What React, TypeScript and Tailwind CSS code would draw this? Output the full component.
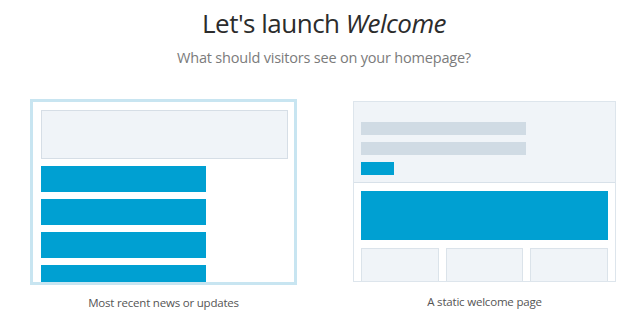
import React from "react";

export default function App() {
  const font = { fontFamily: '"Open Sans", "Noto Sans", sans-serif' };
  return (
    <div className="w-[640px] h-[335px] bg-white overflow-hidden" style={font}>
      <div className="flex flex-col items-center pt-[5px] pl-[8px]">
        <h1 className="text-[26px] leading-[36px] text-[#2c2c2c] font-normal tracking-[-0.5px]">
          Let's launch <em className="italic">Welcome</em>
        </h1>
        <p className="mt-[7px] text-[14.5px] leading-[20px] text-[#7b7b7b] tracking-[-0.2px]">
          What should visitors see on your homepage?
        </p>
      </div>

      <div className="flex mt-[33px] pl-[32px] gap-[58px]">
        <div className="flex flex-col items-center w-[263px]">
          <div className="w-[263px] h-[182px] border border-[#c8e5f1] outline-2 outline-solid outline-[#c8e5f1] bg-white p-[8px] pr-[6px] pb-0 overflow-hidden flex flex-col gap-[7px]">
            <div className="h-[49px] shrink-0 bg-[#f0f4f8] border border-[#d6dee6]" />
            <div className="h-[26px] w-[165px] shrink-0 bg-[#00a0d2]" />
            <div className="h-[26px] w-[165px] shrink-0 bg-[#00a0d2]" />
            <div className="h-[26px] w-[165px] shrink-0 bg-[#00a0d2]" />
            <div className="h-[26px] w-[165px] shrink-0 bg-[#00a0d2]" />
          </div>
          <div className="mt-[13px] text-[11.5px] leading-[14px] text-[#555] tracking-[-0.2px]">
            Most recent news or updates
          </div>
        </div>

        <div className="flex flex-col items-center w-[263px]">
          <div className="w-[263px] h-[181px] border border-[#dde5ec] bg-white overflow-hidden flex flex-col">
            <div className="h-[81px] shrink-0 bg-[#f0f4f8] border-b border-[#d8e1e9] px-[7px] pt-[20px] flex flex-col gap-[7px]">
              <div className="h-[13px] w-[165px] bg-[#d0dbe4]" />
              <div className="h-[13px] w-[165px] bg-[#d0dbe4]" />
              <div className="h-[13px] w-[33px] bg-[#00a0d2]" />
            </div>
            <div className="px-[7px] pt-[8px] flex flex-col gap-[8px]">
              <div className="h-[49px] w-[247px] bg-[#00a0d2]" />
              <div className="flex gap-[7px]">
                <div className="h-[40px] flex-1 bg-[#f0f4f8] border border-[#dbe3ea]" />
                <div className="h-[40px] flex-1 bg-[#f0f4f8] border border-[#dbe3ea]" />
                <div className="h-[40px] flex-1 bg-[#f0f4f8] border border-[#dbe3ea]" />
              </div>
            </div>
          </div>
          <div className="mt-[13px] text-[11.5px] leading-[14px] text-[#555] tracking-[-0.2px]">
            A static welcome page
          </div>
        </div>
      </div>
    </div>
  );
}
